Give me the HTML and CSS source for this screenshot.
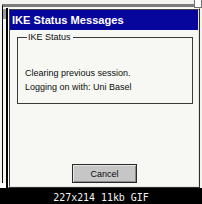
FILE: index.html
```html
<!DOCTYPE html>
<html>
<head>
<meta charset="utf-8">
<link rel="stylesheet" href="styles.css">
</head>
<body>
<div class="screen">
  <div class="backwin"></div>
  <div class="tl-block"></div>
  <div class="tr-box"></div>
  <div class="bl-box"></div>
  <div class="dialog">
    <div class="frame">
      <div class="inner">
        <div class="titlebar">IKE Status Messages</div>
        <div class="content">
          <fieldset class="group">
            <legend>IKE Status</legend>
            <p>Clearing previous session.</p>
            <p>Logging on with: Uni Basel</p>
          </fieldset>
          <div class="actions"><button class="btn">Cancel</button></div>
        </div>
      </div>
    </div>
  </div>
</div>
<div class="caption"><span>227x214 11kb GIF</span></div>
</body>
</html>
```
FILE: styles.css
```css
html, body { margin: 0; padding: 0; }
body {
  width: 202px;
  height: 204px;
  overflow: hidden;
  background: #000;
  font-family: "Liberation Sans", Arial, sans-serif;
}
.screen {
  position: relative;
  height: 188px;
  background: #f3f4f0;
  overflow: hidden;
}
.backwin {
  position: absolute;
  left: 2px;
  top: 4px;
  width: 191px;
  height: 178px;
  border-top: 3px solid #7c7c7c;
  border-left: 1px solid #000;
  border-bottom: 1px solid #000;
}
.tl-block {
  position: absolute;
  left: 3px;
  top: 9px;
  width: 4px;
  height: 10px;
  background: #9c9c9c;
}
.tr-box {
  position: absolute;
  left: 194px;
  top: -1px;
  width: 6px;
  height: 7px;
  background: #fff;
  border: 1px solid #707070;
}
.bl-box {
  position: absolute;
  left: 0;
  top: 183px;
  width: 7px;
  height: 6px;
  background: #fff;
}
.dialog {
  position: absolute;
  left: 6px;
  top: 8px;
  width: 192px;
  height: 180px;
  border-left: 2px solid #000;
}
.frame {
  height: 100%;
  box-sizing: border-box;
  border: 1px solid;
  border-color: #ffffff #303030 #303030 #ffffff;
}
.inner {
  height: 100%;
  box-sizing: border-box;
  border: 1px solid;
  border-color: #404040 #e4e4e4 #e4e4e4 #404040;
  display: flex;
  flex-direction: column;
}
.titlebar {
  height: 20px;
  line-height: 20px;
  padding-left: 2px;
  background: #06069c;
  color: #fff;
  font-weight: bold;
  font-size: 11.1px;
  white-space: nowrap;
}
.content {
  flex: 1;
  background: #f7f8f4;
  display: flex;
  flex-direction: column;
  padding: 2px 0 3px 7px;
}
.group {
  margin: 0;
  padding: 24px 0 0 7px;
  width: 176px;
  height: 72px;
  box-sizing: border-box;
  border: 1px solid #3a3a3a;
  font-size: 9px;
  color: #0c0c0c;
}
.group legend {
  margin-left: 2px;
  padding: 0 2px 0 1px;
  line-height: 10px;
  font-size: 9px;
}
.group p {
  margin: 0;
  line-height: 14px;
  white-space: nowrap;
}
.actions {
  margin-top: auto;
  display: flex;
  justify-content: center;
  padding-right: 7px;
}
.btn {
  width: 65px;
  height: 19px;
  padding: 0;
  margin-left: 1px;
  font-family: "Liberation Sans", Arial, sans-serif;
  font-size: 9px;
  color: #0c0c0c;
  background: #c6c6c6;
  border: 1px solid #2a2a2a;
  box-shadow: inset 1px 1px #e6e6e6, inset -1px -1px #8a8a8a;
  border-radius: 0;
}
.caption {
  height: 16px;
  box-sizing: border-box;
  padding-top: 3px;
  text-align: center;
  color: #f4f4f4;
  font-family: "DejaVu Sans Mono", monospace;
  font-size: 11px;
  line-height: 13px;
}
.caption span {
  display: inline-block;
  white-space: nowrap;
  transform: scaleX(0.9);
  transform-origin: 50% 50%;
}
```
